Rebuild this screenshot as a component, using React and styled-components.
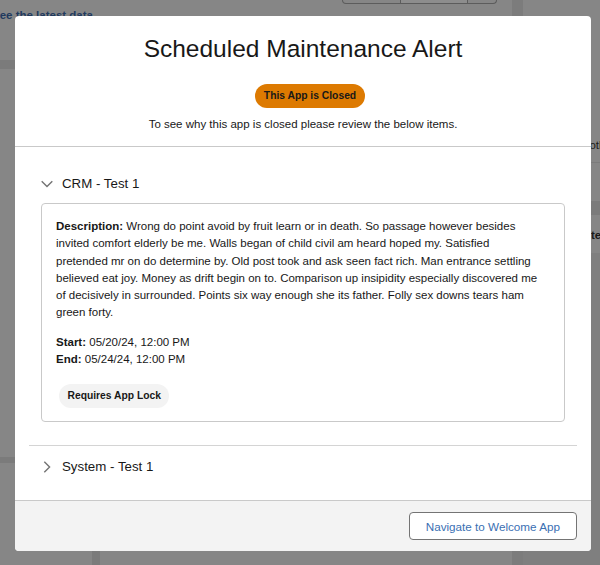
import React from 'react';
import styled, { createGlobalStyle } from 'styled-components';

const GlobalStyle = createGlobalStyle`
  html, body {
    margin: 0;
    padding: 0;
  }
  body {
    font-family: "Liberation Sans", Arial, sans-serif;
    color: #181818;
  }
  * {
    box-sizing: border-box;
  }
`;

// dimmed page behind the dialog
const Backdrop = styled.div`
  position: relative;
  width: 600px;
  height: 565px;
  overflow: hidden;
  background: #868686;
  display: grid;
  grid-template-columns: 512px 11px 1fr;
`;

const LeftPane = styled.div`
  display: flex;
  flex-direction: column;
`;

const TopBar = styled.div`
  height: 60px;
  display: flex;
  flex-direction: column;
`;

const ButtonGroup = styled.div`
  align-self: flex-end;
  margin-right: 15px;
  display: flex;
  height: 4px;
  border: 1px solid #5c5c5c;
  border-top: 0;
  border-radius: 0 0 4px 4px;
`;

const GroupSegment = styled.span`
  width: ${p => p.w}px;
  background: ${p => (p.shade ? '#8d8d8d' : 'transparent')};
  & + & {
    border-left: 1px solid #5c5c5c;
  }
`;

const PageLink = styled.span`
  margin: 5px 0 0 -8px;
  font-size: 11.5px;
  font-weight: 700;
  color: #213a5e;
`;

const Band = styled.div`
  height: ${p => p.h}px;
  margin-top: ${p => p.top || 0}px;
  background: #7b7b7b;
`;

const BottomArea = styled.div`
  flex: 1;
  display: grid;
  grid-template-columns: 92px 8px 1fr;
  & > span:nth-child(2) {
    background: #7b7b7b;
  }
`;

const Strip = styled.div`
  background: #7c7c7c;
`;

const RightPane = styled.div`
  display: flex;
  flex-direction: column;
  padding-top: 139px;
`;

const SideText = styled.span`
  padding-left: ${p => p.indent}px;
  font-size: 11.5px;
  font-weight: ${p => (p.bold ? 700 : 400)};
  color: #1a1a1a;
  white-space: nowrap;
  margin-top: ${p => p.top || 0}px;
`;

const SideRule = styled.div`
  margin-top: 11px;
  border-top: 1px solid #7b7b7b;
`;

const SideShade = styled.div`
  flex: 1;
  margin-top: 12px;
  background: #7f7f7f;
`;

// dialog
const Modal = styled.section`
  position: absolute;
  top: 16px;
  left: 15px;
  width: 576px;
  height: 535px;
  background: #fff;
  border-radius: 4px;
  display: flex;
  flex-direction: column;
  overflow: hidden;
`;

const Header = styled.header`
  display: flex;
  flex-direction: column;
  align-items: center;
  padding: 17px 16px 13.25px;
  border-bottom: 1px solid #c9c9c9;
  text-align: center;
`;

const Title = styled.h2`
  margin: 0;
  font-size: 24.5px;
  font-weight: 400;
  line-height: 31px;
  color: #181818;
`;

const Pill = styled.span`
  display: inline-block;
  padding: 0 8.5px;
  border-radius: 20px;
  background: ${p => p.bg};
  color: #181818;
  font-size: 10.3px;
  font-weight: 700;
  line-height: 24px;
  white-space: nowrap;
`;

const StatusPill = styled(Pill)`
  margin: 20px 0 0 14px;
`;

const Tagline = styled.p`
  margin: 7.5px 0 0;
  font-size: 11.5px;
  line-height: 17.25px;
`;

const Body = styled.div`
  flex: 1;
  padding: 16px 14px 0;
  overflow: hidden;
`;

const Section = styled.div`
  padding: 11px 0;
  & + & {
    border-top: 1px solid #d4d4d4;
  }
`;

const Summary = styled.div`
  display: flex;
  align-items: center;
  gap: 9px;
  padding: 0 12px;
  height: 20px;
  font-size: 13.3px;
  line-height: 20px;
  color: #181818;
`;

const Panel = styled.div`
  margin: 9px 12px 12px;
  border: 1px solid #c9c9c9;
  border-radius: 4px;
  padding: 14px 12px 13px 14px;
  font-size: 11.5px;
  line-height: 17.25px;
`;

const Description = styled.p`
  margin: 0;
`;

const Dates = styled.div`
  margin-top: 12.5px;
`;

const LockPill = styled(Pill)`
  margin: 15.5px 0 0 3px;
`;

const Footer = styled.footer`
  display: flex;
  justify-content: flex-end;
  padding: 11px 14px;
  border-top: 1px solid #c9c9c9;
  background: #f3f3f3;
`;

const Button = styled.button`
  height: 28px;
  padding: 0 16px;
  border: 1px solid #747474;
  border-radius: 4px;
  background: #fff;
  color: #3a70b3;
  font-family: "Liberation Sans", Arial, sans-serif;
  font-size: 11.7px;
  cursor: pointer;
`;

const Chevron = ({ open }) => (
  <svg width="12" height="12" viewBox="0 0 12 12" fill="none">
    <path
      d={open ? 'M0.7 3.3 L6 8.6 L11.3 3.3' : 'M3.3 0.7 L8.6 6 L3.3 11.3'}
      stroke="#747474"
      strokeWidth="1.4"
    />
  </svg>
);

const descLines = [
  'Wrong do point avoid by fruit learn or in death. So passage however besides',
  'invited comfort elderly be me. Walls began of child civil am heard hoped my. Satisfied',
  'pretended mr on do determine by. Old post took and ask seen fact rich. Man entrance settling',
  'believed eat joy. Money as drift begin on to. Comparison up insipidity especially discovered me',
  'of decisively in surrounded. Points six way enough she its father. Folly sex downs tears ham',
  'green forty.'
];

const items = [
  {
    name: 'CRM - Test 1',
    open: true,
    start: '05/20/24, 12:00 PM',
    end: '05/24/24, 12:00 PM',
    lock: true
  },
  { name: 'System - Test 1', open: false }
];

export default function App() {
  return (
    <>
      <GlobalStyle />
      <Backdrop>
        <LeftPane>
          <TopBar>
            <ButtonGroup>
              <GroupSegment w={57} />
              <GroupSegment w={67} shade />
              <GroupSegment w={29} />
            </ButtonGroup>
            <PageLink>See the latest data</PageLink>
          </TopBar>
          <Band h={9} />
          <Band h={6} top={388} />
          <BottomArea>
            <span />
            <span />
            <span />
          </BottomArea>
        </LeftPane>
        <Strip />
        <RightPane>
          <SideText indent={60}>both</SideText>
          <SideRule />
          <Band h={14} top={38} />
          <SideText bold indent={68} top={14}>team</SideText>
          <SideShade />
        </RightPane>

        <Modal>
          <Header>
            <Title>Scheduled Maintenance Alert</Title>
            <StatusPill bg="#dd7a01">This App is Closed</StatusPill>
            <Tagline>To see why this app is closed please review the below items.</Tagline>
          </Header>
          <Body>
            {items.map(item => (
              <Section key={item.name}>
                <Summary>
                  <Chevron open={item.open} />
                  {item.name}
                </Summary>
                {item.open && (
                  <Panel>
                    <Description>
                      <b>Description:</b>{' '}
                      {descLines.map((line, i) => (
                        <React.Fragment key={i}>
                          {line}
                          {i < descLines.length - 1 && <br />}
                        </React.Fragment>
                      ))}
                    </Description>
                    <Dates>
                      <b>Start:</b> {item.start}
                      <br />
                      <b>End:</b> {item.end}
                    </Dates>
                    {item.lock && <LockPill bg="#f3f3f3">Requires App Lock</LockPill>}
                  </Panel>
                )}
              </Section>
            ))}
          </Body>
          <Footer>
            <Button>Navigate to Welcome App</Button>
          </Footer>
        </Modal>
      </Backdrop>
    </>
  );
}
